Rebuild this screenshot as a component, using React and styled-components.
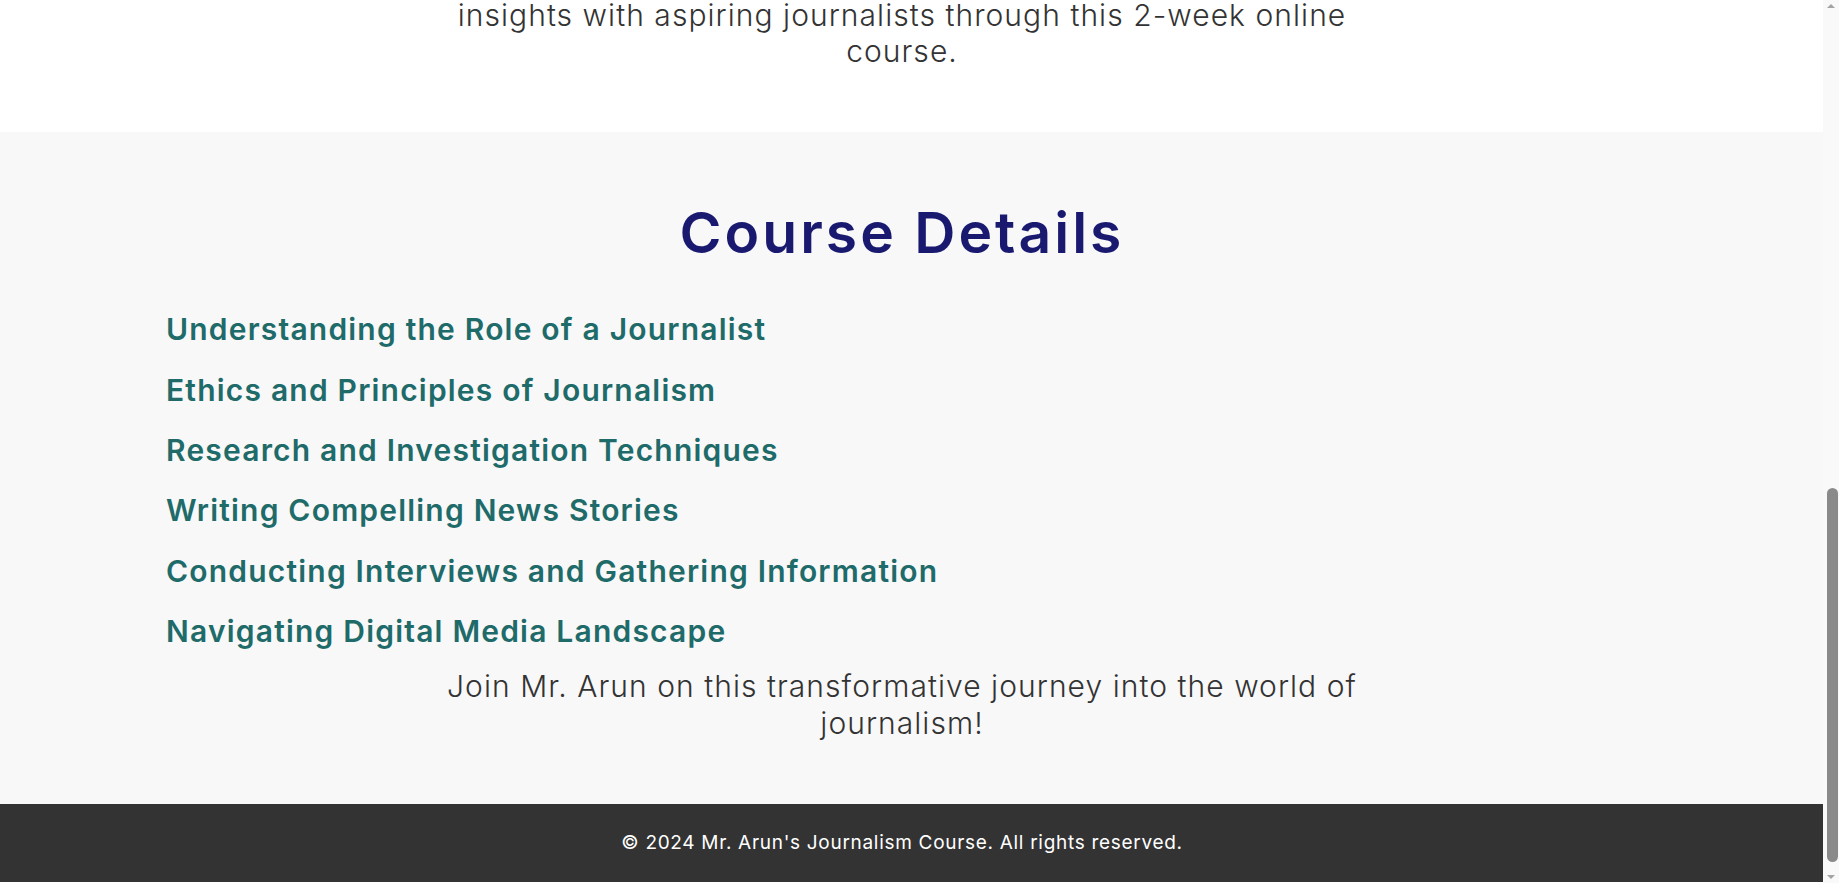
import React from "react";
import styled, { createGlobalStyle } from "styled-components";

const Global = createGlobalStyle`
  body {
    margin: 0;
    background: #ffffff;
    font-family: Inter, "Noto Sans", "Liberation Sans", sans-serif;
    color: #333333;
  }
  * { box-sizing: border-box; }
`;

const Page = styled.div`
  display: flex;
  flex-direction: column;
  padding-right: 16px;
`;

const Inner = styled.div`
  width: 1804px;
  display: flex;
  flex-direction: column;
  align-items: ${(p) => (p.$start ? "stretch" : "center")};
`;

const IntroSection = styled.section`
  background: #ffffff;
  padding-bottom: 63px;
`;

const Lead = styled.p`
  margin: ${(p) => p.$margin || "0"};
  max-width: 940px;
  text-align: center;
  font-size: 30px;
  font-weight: 300;
  line-height: ${(p) => p.$lh || "36px"};
  letter-spacing: 1.05px;
  color: #333333;
`;

const DetailsSection = styled.section`
  background: #f8f8f8;
  padding: 67px 0 61.75px;
`;

const Heading = styled.h2`
  margin: 0;
  font-size: 57px;
  font-weight: 600;
  line-height: 1.2;
  letter-spacing: 3px;
  color: #191970;
  text-align: center;
`;

const TopicList = styled.ul`
  list-style: none;
  margin: 44px 0 18.75px;
  padding: 0 0 0 166px;
  display: flex;
  flex-direction: column;
  gap: 24.3px;
`;

const Topic = styled.li`
  font-size: 30px;
  font-weight: 600;
  line-height: 36px;
  letter-spacing: 1.2px;
  color: #1e6b6a;
`;

const Footer = styled.footer`
  background: #333333;
  color: #ffffff;
  padding: 20px 0;
`;

const FooterText = styled.p`
  margin: 0;
  font-size: 19px;
  line-height: 38px;
  letter-spacing: 0.7px;
  text-align: center;
`;

const ScrollTrack = styled.div`
  position: fixed;
  top: 0;
  right: 0;
  bottom: 0;
  width: 16px;
  background: #f9f9f9;
`;

const Arrow = styled.span`
  position: absolute;
  left: 4px;
  width: 0;
  height: 0;
  border-left: 4px solid transparent;
  border-right: 4px solid transparent;
  ${(p) =>
    p.$down
      ? "bottom: 4px; border-top: 4px solid #a3a3a3;"
      : "top: 4px; border-bottom: 4px solid #a3a3a3;"}
`;

const Thumb = styled.div`
  position: absolute;
  left: 4px;
  right: 1px;
  top: 488px;
  bottom: 21px;
  border-radius: 6px;
  background: #8a8a8a;
`;

const topics = [
  "Understanding the Role of a Journalist",
  "Ethics and Principles of Journalism",
  "Research and Investigation Techniques",
  "Writing Compelling News Stories",
  "Conducting Interviews and Gathering Information",
  "Navigating Digital Media Landscape",
];

export default function App() {
  return (
    <Page>
      <Global />
      <IntroSection>
        <Inner>
          <Lead $margin="-3px 0 0">
            insights with aspiring journalists through this 2-week online course.
          </Lead>
        </Inner>
      </IntroSection>
      <DetailsSection>
        <Inner>
          <Heading>Course Details</Heading>
        </Inner>
        <Inner $start>
          <TopicList>
            {topics.map((t) => (
              <Topic key={t}>{t}</Topic>
            ))}
          </TopicList>
        </Inner>
        <Inner>
          <Lead $lh="37.5px">
            Join Mr. Arun on this transformative journey into the world of journalism!
          </Lead>
        </Inner>
      </DetailsSection>
      <Footer>
        <Inner>
          <FooterText>© 2024 Mr. Arun's Journalism Course. All rights reserved.</FooterText>
        </Inner>
      </Footer>
      <ScrollTrack aria-hidden="true">
        <Arrow />
        <Thumb />
        <Arrow $down />
      </ScrollTrack>
    </Page>
  );
}
